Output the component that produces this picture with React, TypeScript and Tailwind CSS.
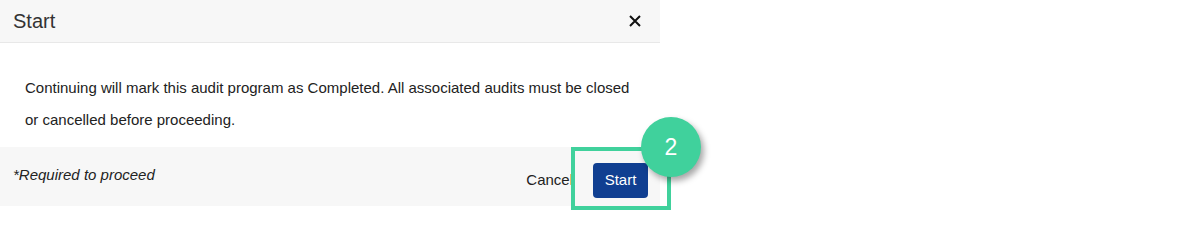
export default function App() {
  return (
    <div className="min-h-[245px] w-[1200px] bg-white font-['Liberation_Sans',Arial,sans-serif]">
      <div className="relative w-[660px] bg-white">
        <div className="flex h-[43px] items-center justify-between border-b border-[#e8e8e8] bg-[#f7f7f7] pl-[13px] pr-[19px]">
          <h2 className="text-[20px] leading-none text-[#333]">Start</h2>
          <button type="button" aria-label="Close" className="flex h-[12px] w-[12px] items-center justify-center">
            <svg width="12" height="12" viewBox="0 0 12 12">
              <path d="M1 1L11 11M11 1L1 11" stroke="#111" strokeWidth="2" />
            </svg>
          </button>
        </div>

        <div className="px-[25px] pt-[29px] pb-[11px] text-[15px] leading-[32px] text-[#222]">
          Continuing will mark this audit program as Completed. All associated audits must be closed or cancelled before
          proceeding.
        </div>

        <div className="flex h-[59px] items-start justify-between bg-[#f7f7f7] pl-[13px] pr-[12px]">
          <p className="mt-[18px] text-[15px] italic leading-[20px] text-[#222]">*Required to proceed</p>
          <div className="mt-[16px] flex items-center gap-[20px]">
            <button type="button" className="text-[15px] text-[#222]">
              Cancel
            </button>
            <button type="button" className="h-[35px] w-[55px] rounded-[4px] bg-[#103f91] text-[15px] text-white">
              Start
            </button>
          </div>
        </div>

        <div className="absolute left-[571px] top-[147px] h-[63px] w-[100px] border-4 border-[#40d19c]" />
        <div className="absolute left-[641px] top-[117px] flex h-[60px] w-[60px] items-center justify-center rounded-full bg-[#40d19c] text-[23px] text-white shadow-[3px_4px_6px_rgba(0,0,0,0.35)]">
          2
        </div>
      </div>
    </div>
  );
}
